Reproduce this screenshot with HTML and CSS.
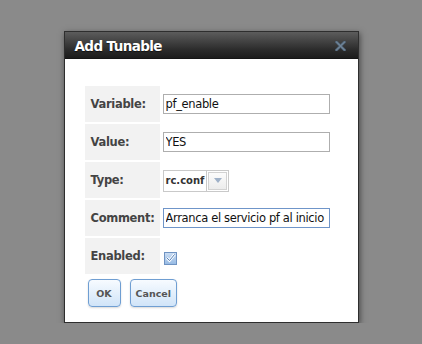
FILE: index.html
```html
<!DOCTYPE html>
<html lang="en">
<head>
    <meta charset="UTF-8">
    <title>Add Tunable</title>
    <link rel="stylesheet" href="styles.css">
</head>
<body>

<div class="dialog">
    <div class="titlebar">
        <span class="title">Add Tunable</span>
        <span class="close">
            <svg width="11" height="10" viewBox="0 0 11 10">
                <path d="M1.5 1 L9.5 9 M9.5 1 L1.5 9" stroke="#4e6072" stroke-width="2.8" stroke-linecap="square"/>
                <path d="M1.5 1 L9.5 9 M9.5 1 L1.5 9" stroke="#72879b" stroke-width="1.2" stroke-linecap="square"/>
            </svg>
        </span>
    </div>
    <div class="dialog-body">
        <table class="form">
            <tr>
                <th>Variable:</th>
                <td><input type="text" class="field" value="pf_enable"></td>
            </tr>
            <tr>
                <th>Value:</th>
                <td><input type="text" class="field" value="YES"></td>
            </tr>
            <tr>
                <th>Type:</th>
                <td>
                    <div class="select">
                        <span class="select-value">rc.conf</span>
                        <span class="select-arrow"><span class="triangle"></span></span>
                    </div>
                </td>
            </tr>
            <tr>
                <th>Comment:</th>
                <td><input type="text" class="field focused" value="Arranca el servicio pf al inicio"></td>
            </tr>
            <tr>
                <th>Enabled:</th>
                <td>
                    <span class="checkbox">
                        <svg width="11" height="10" viewBox="0 0 11 10">
                            <path d="M1.8 4.8 L4.5 7.6 L9.6 1.4" fill="none" stroke="#ffffff" stroke-width="2.6"/>
                            <path d="M1.8 4.8 L4.5 7.6 L9.6 1.4" fill="none" stroke="#4f7db8" stroke-width="1"/>
                        </svg>
                    </span>
                </td>
            </tr>
        </table>
        <div class="buttons">
            <button class="btn btn-ok">OK</button>
            <button class="btn">Cancel</button>
        </div>
    </div>
</div>

</body>
</html>
```

FILE: styles.css
```css
body {
    margin: 0;
    padding-top: 31px;
    background-color: #8a8a8a;
    font-family: "DejaVu Sans", Verdana, sans-serif;
    display: flex;
    justify-content: center;
}
.dialog {
    width: 293px;
    background-color: #fff;
    border: 1px solid #2e2e2e;
    box-shadow: 1px 2px 6px rgba(0, 0, 0, 0.5);
}
.titlebar {
    height: 26px;
    border-bottom: 1px solid #151515;
    background: linear-gradient(to bottom, #5c5c5c, #2a2a2a 70%, #1c1c1c);
    display: flex;
    align-items: center;
    justify-content: space-between;
    padding: 0 12px 0 10px;
}
.title {
    color: #fff;
    font-weight: bold;
    font-size: 13.5px;
    letter-spacing: -0.6px;
    text-shadow: 0 1px 1px rgba(0, 0, 0, 0.6);
    padding-top: 1px;
}
.close {
    display: flex;
    margin-top: 1px;
}
.dialog-body {
    padding: 25px 20px 15px 20px;
}
.form {
    border-collapse: separate;
    border-spacing: 0 2px;
}
.form th {
    width: 69px;
    height: 36px;
    padding: 0 0 0 6px;
    background-color: #f2f2f2;
    color: #444;
    font-size: 11.5px;
    letter-spacing: -0.3px;
    font-weight: bold;
    text-align: left;
    vertical-align: middle;
}
.form td {
    padding: 0 0 0 3px;
    vertical-align: middle;
}
.field {
    box-sizing: border-box;
    width: 167px;
    height: 20px;
    margin: 0;
    padding: 0 1px 0 2px;
    border: 1px solid #aeaeae;
    font-family: "DejaVu Sans", Verdana, sans-serif;
    font-size: 11.5px;
    letter-spacing: -0.35px;
    color: #111;
    outline: none;
    display: block;
}
.field.focused {
    border-color: #6f95c9;
}
.select {
    display: inline-flex;
    height: 22px;
    box-sizing: border-box;
    border: 1px solid #c9c9c9;
    vertical-align: middle;
    margin-top: 1px;
}
.select-value {
    display: flex;
    align-items: center;
    padding: 0 2px 0 2px;
    font-size: 10px;
    font-weight: bold;
    color: #333;
    border-right: 1px solid #c9c9c9;
}
.select-arrow {
    width: 17px;
    margin: 1px;
    border: 1px solid #d2d2d2;
    background: linear-gradient(to bottom, #fcfcfc, #ececec);
    display: flex;
    align-items: center;
    justify-content: center;
}
.triangle {
    width: 0;
    height: 0;
    border-left: 4px solid transparent;
    border-right: 4px solid transparent;
    border-top: 5px solid #9fb1c8;
}
.checkbox {
    display: inline-flex;
    align-items: center;
    justify-content: center;
    width: 13px;
    height: 13px;
    box-sizing: border-box;
    border: 1px solid #6f93c2;
    background: linear-gradient(to bottom, #c9dcf2, #98bbe4);
    margin: 2px 0 0 1px;
    vertical-align: middle;
}
.buttons {
    margin: 3px 0 0 3px;
    display: flex;
    gap: 9px;
}
.btn {
    height: 28px;
    padding: 0 5px;
    border: 1px solid #6f9ed2;
    border-radius: 4px;
    background: linear-gradient(to bottom, #f7fbff, #d0e4f8);
    box-shadow: 0 1px 2px rgba(0, 0, 0, 0.15);
    color: #555;
    font-family: "DejaVu Sans", Verdana, sans-serif;
    font-size: 9.5px;
    font-weight: bold;
    cursor: pointer;
}
.btn-ok {
    min-width: 33px;
}
```
